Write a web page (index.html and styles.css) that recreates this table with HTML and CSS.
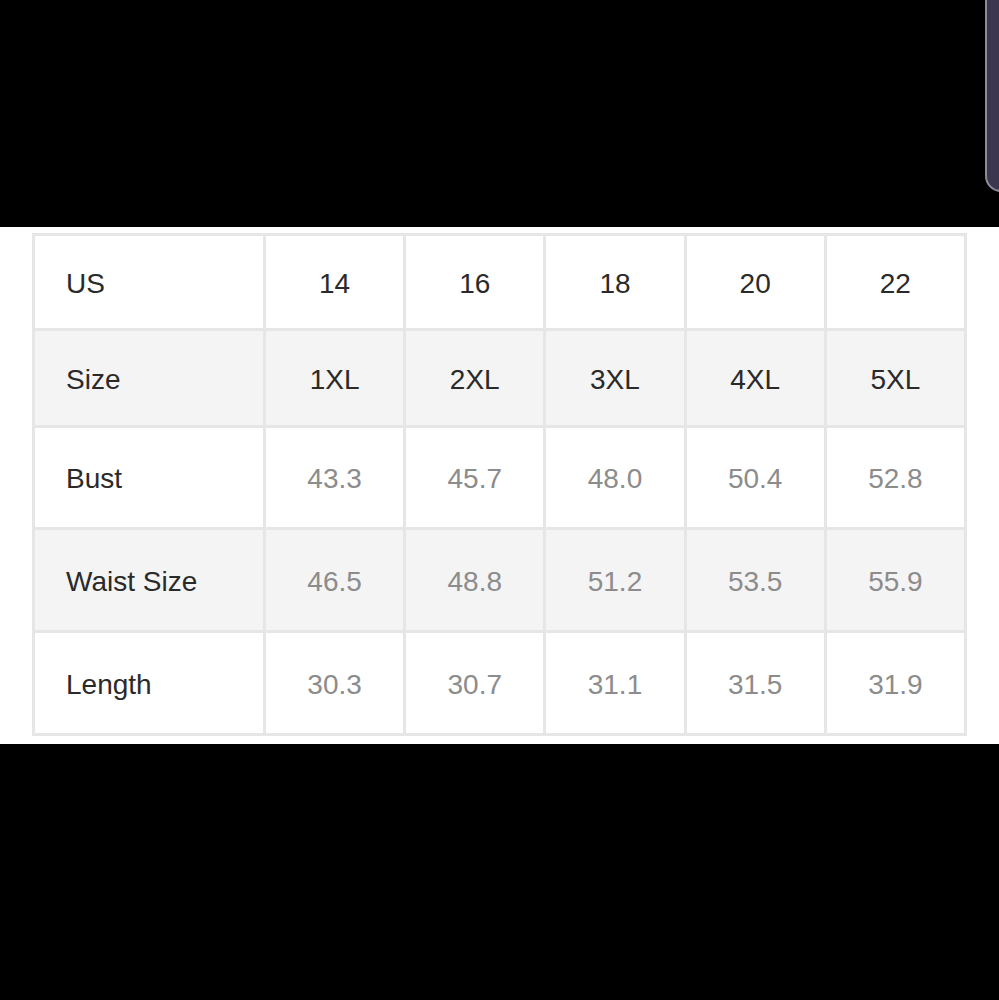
FILE: index.html
```html
<!DOCTYPE html>
<html>
<head>
<meta charset="utf-8">
<link rel="stylesheet" href="styles.css">
</head>
<body>
<div class="tab"></div>
<div class="sheet">
  <table class="chart">
    <colgroup>
      <col class="c-label"><col><col><col><col><col>
    </colgroup>
    <tr class="r1">
      <th>US</th><td class="dark">14</td><td class="dark">16</td><td class="dark">18</td><td class="dark">20</td><td class="dark">22</td>
    </tr>
    <tr class="r2 shade">
      <th>Size</th><td class="dark">1XL</td><td class="dark">2XL</td><td class="dark">3XL</td><td class="dark">4XL</td><td class="dark">5XL</td>
    </tr>
    <tr class="r3">
      <th>Bust</th><td>43.3</td><td>45.7</td><td>48.0</td><td>50.4</td><td>52.8</td>
    </tr>
    <tr class="r4 shade">
      <th>Waist Size</th><td>46.5</td><td>48.8</td><td>51.2</td><td>53.5</td><td>55.9</td>
    </tr>
    <tr class="r5">
      <th>Length</th><td>30.3</td><td>30.7</td><td>31.1</td><td>31.5</td><td>31.9</td>
    </tr>
  </table>
</div>
</body>
</html>
```
FILE: styles.css
```css
html, body {
  margin: 0;
  padding: 0;
  background: #000;
  width: 999px;
  height: 1000px;
  overflow: hidden;
  position: relative;
}
.tab {
  position: absolute;
  left: 985px;
  top: -20px;
  width: 40px;
  height: 208px;
  background: #3a374f;
  border: 2px solid #8e8c9a;
  border-radius: 0 0 0 16px;
}
.sheet {
  margin-top: 227px;
  height: 517px;
  background: #fff;
  padding: 6px 0 0 32px;
  box-sizing: border-box;
}
.chart {
  border-collapse: collapse;
  table-layout: fixed;
  width: 935px;
  font-family: "Liberation Sans", Arial, Helvetica, sans-serif;
  font-size: 28px;
}
.c-label { width: 231px; }
.chart th, .chart td {
  border: 3px solid #e6e6e6;
  padding: 3px 0 0 0;
  vertical-align: middle;
}
.chart th {
  text-align: left;
  padding-left: 31px;
  font-weight: normal;
  color: #2a2a2a;
}
.chart td {
  text-align: center;
  color: #8c8c8c;
}
.chart td.dark { color: #2a2a2a; }
.shade th, .shade td { background: #f4f4f4; }
.r1 { height: 95px; }
.r2 { height: 97px; }
.r3 { height: 102px; }
.r4 { height: 103px; }
.r5 { height: 103px; }
```
